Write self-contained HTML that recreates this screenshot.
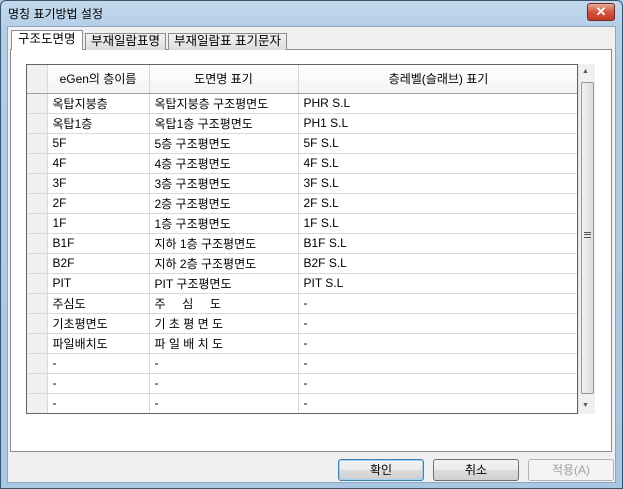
<!DOCTYPE html>
<html><head><meta charset="utf-8"><style>
*{margin:0;padding:0;box-sizing:border-box}
body{width:623px;height:489px;overflow:hidden;font-family:"Liberation Sans","Noto Sans CJK KR","NanumGothic",sans-serif;font-size:12px;color:#000;background:#a9c6e2}
.a{position:absolute}
#win{left:0;top:0;width:623px;height:489px;background:linear-gradient(#c4d8ec,#b2cde6 30px,#a9c6e2);border:1px solid #3a5570;border-radius:6px 6px 0 0}
#title{left:8px;top:5px;font-size:12px;color:#000}
#close{left:587px;top:3px;width:28px;height:18px;border:1px solid #6b2a22;border-radius:3px;background:linear-gradient(#e9a99a,#d1553f 50%,#c23a25);color:#fff;font-weight:bold;text-align:center;line-height:16px;font-size:13px}
#client{left:7px;top:26px;width:609px;height:457px;background:#f0f0f0;border:1px solid #8ba6c2}
#panel{left:10px;top:49px;width:602px;height:403px;background:#fff;border:1px solid #898c95}
.tab{top:33px;height:17px;border:1px solid #898c95;border-bottom:none;background:linear-gradient(#f2f2f2,#dcdcdc);padding:0 5px;line-height:15px;font-size:12.5px}
#t1{left:11px;top:30px;height:20px;background:#fff;z-index:2;line-height:17px;padding:0 6px}
#grid{left:26px;top:64px;width:552px;height:350px;border:1px solid #646464;background:#fff;overflow:hidden}
table{border-collapse:collapse;table-layout:fixed;font-size:12px}
td{height:20px;border-right:1px solid #d8d8d8;border-bottom:1px solid #d8d8d8;padding-left:5px;white-space:nowrap;overflow:hidden}
td.rh{background:#f0f0f0;border-color:#d8d8d8;padding:0}
tr.h td{height:28px;background:linear-gradient(#fff,#f3f3f3);text-align:center;border-bottom:1px solid #a0a0a0;padding:0}
#sb{left:578px;top:64px;width:17px;height:350px;background:#f0f0f0;border-left:1px solid #e0e0e0}
#thumb{left:581px;top:82px;width:13px;height:312px;border:1px solid #979797;border-radius:2px;background:linear-gradient(90deg,#f2f2f2,#dcdcdc)}
.btn{top:459px;width:86px;height:22px;border:1px solid #707070;border-radius:3px;background:linear-gradient(#f2f2f2,#ebebeb 50%,#dddddd 50%,#cfcfcf);text-align:center;line-height:20px;font-size:12px}
</style></head><body>
<div id="win" class="a"></div>
<div id="title" class="a">명칭 표기방법 설정</div>
<div id="close" class="a">✕</div>
<div id="client" class="a"></div>
<div id="panel" class="a"></div>
<div id="t1" class="a tab">구조도면명</div>
<div class="a tab" style="left:85px">부재일람표명</div>
<div class="a tab" style="left:168px">부재일람표 표기문자</div>
<div id="grid" class="a">
<table style="width:552px">
<colgroup><col style="width:20px"><col style="width:102px"><col style="width:149px"><col style="width:281px"></colgroup>
<tr class="h"><td class="rh" style="background:#f0f0f0"></td><td>eGen의 층이름</td><td>도면명 표기</td><td>층레벨(슬래브) 표기</td></tr>
<tr><td class="rh"></td><td>옥탑지붕층</td><td>옥탑지붕층 구조평면도</td><td>PHR S.L</td></tr>
<tr><td class="rh"></td><td>옥탑1층</td><td>옥탑1층 구조평면도</td><td>PH1 S.L</td></tr>
<tr><td class="rh"></td><td>5F</td><td>5층 구조평면도</td><td>5F S.L</td></tr>
<tr><td class="rh"></td><td>4F</td><td>4층 구조평면도</td><td>4F S.L</td></tr>
<tr><td class="rh"></td><td>3F</td><td>3층 구조평면도</td><td>3F S.L</td></tr>
<tr><td class="rh"></td><td>2F</td><td>2층 구조평면도</td><td>2F S.L</td></tr>
<tr><td class="rh"></td><td>1F</td><td>1층 구조평면도</td><td>1F S.L</td></tr>
<tr><td class="rh"></td><td>B1F</td><td>지하 1층 구조평면도</td><td>B1F S.L</td></tr>
<tr><td class="rh"></td><td>B2F</td><td>지하 2층 구조평면도</td><td>B2F S.L</td></tr>
<tr><td class="rh"></td><td>PIT</td><td>PIT 구조평면도</td><td>PIT S.L</td></tr>
<tr><td class="rh"></td><td>주심도</td><td>주&nbsp;&nbsp;&nbsp;&nbsp;&nbsp;심&nbsp;&nbsp;&nbsp;&nbsp;&nbsp;도</td><td>-</td></tr>
<tr><td class="rh"></td><td>기초평면도</td><td>기 초 평 면 도</td><td>-</td></tr>
<tr><td class="rh"></td><td>파일배치도</td><td>파 일 배 치 도</td><td>-</td></tr>
<tr><td class="rh"></td><td>-</td><td>-</td><td>-</td></tr>
<tr><td class="rh"></td><td>-</td><td>-</td><td>-</td></tr>
<tr><td class="rh"></td><td>-</td><td>-</td><td>-</td></tr>
</table></div>
<div id="sb" class="a"></div>
<div class="a" style="left:582px;top:68px;font-size:7px;color:#555">▲</div>
<div class="a" style="left:582px;top:402px;font-size:7px;color:#555">▼</div>
<div id="thumb" class="a"></div>
<div class="a" style="left:584px;top:232px;width:7px;height:6px;border-top:1px solid #555;border-bottom:1px solid #555"></div>
<div class="a" style="left:584px;top:234px;width:7px;height:1px;background:#555"></div>
<div class="btn a" style="left:338px;border-color:#3c7fb1;box-shadow:inset 0 0 0 1px #9fd4f5">확인</div>
<div class="btn a" style="left:433px">취소</div>
<div class="btn a" style="left:528px;background:#f4f4f4;border-color:#adb2b5;color:#a0a0a0">적용(A)</div>
</body></html>
